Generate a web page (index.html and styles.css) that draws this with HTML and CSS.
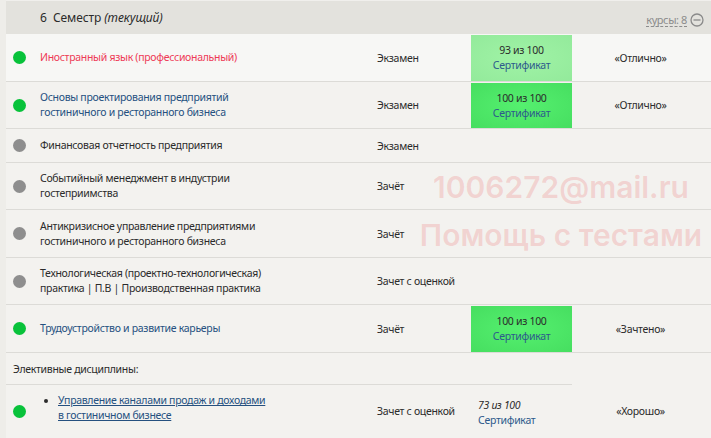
FILE: index.html
```html
<!DOCTYPE html>
<html lang="ru">
<head>
<meta charset="utf-8">
<link rel="stylesheet" href="styles.css">
</head>
<body>
<div class="page">
  <div class="sem-head">
    <span class="sem-num">6</span>
    <span class="sem-title">Семестр <i>(текущий)</i></span>
    <span class="sem-count"><span class="dashed">курсы: 8</span>
      <svg class="minus" width="14" height="14" viewBox="0 0 14 14"><circle cx="7" cy="7" r="6" fill="none" stroke="#8a8a8a" stroke-width="1.3"/><line x1="3.5" y1="7" x2="10.5" y2="7" stroke="#8a8a8a" stroke-width="1.3"/></svg>
    </span>
  </div>

  <div class="row hl h48">
    <div class="c-dot"><span class="dot green"></span></div>
    <div class="c-name red">Иностранный язык (профессиональный)</div>
    <div class="c-type">Экзамен</div>
    <div class="c-score light"><span class="pts">93 из 100</span><span class="cert">Сертификат</span></div>
    <div class="c-res">«Отлично»</div>
  </div>

  <div class="row h46">
    <div class="c-dot"><span class="dot green"></span></div>
    <div class="c-name blue">Основы проектирования предприятий<br>гостиничного и ресторанного бизнеса</div>
    <div class="c-type">Экзамен</div>
    <div class="c-score bright"><span class="pts">100 из 100</span><span class="cert">Сертификат</span></div>
    <div class="c-res">«Отлично»</div>
  </div>

  <div class="row h33">
    <div class="c-dot"><span class="dot grey"></span></div>
    <div class="c-name">Финансовая отчетность предприятия</div>
    <div class="c-type">Экзамен</div>
    <div class="c-score"></div>
    <div class="c-res"></div>
  </div>

  <div class="row h47">
    <div class="c-dot"><span class="dot grey"></span></div>
    <div class="c-name">Событийный менеджмент в индустрии<br>гостеприимства</div>
    <div class="c-type">Зачёт</div>
    <div class="c-score"></div>
    <div class="c-res"></div>
  </div>

  <div class="row h48">
    <div class="c-dot"><span class="dot grey"></span></div>
    <div class="c-name">Антикризисное управление предприятиями<br>гостиничного и ресторанного бизнеса</div>
    <div class="c-type">Зачёт</div>
    <div class="c-score"></div>
    <div class="c-res"></div>
  </div>

  <div class="row h47">
    <div class="c-dot"><span class="dot grey"></span></div>
    <div class="c-name">Технологическая (проектно-технологическая)<br>практика | П.В | Производственная практика</div>
    <div class="c-type">Зачет с оценкой</div>
    <div class="c-score"></div>
    <div class="c-res"></div>
  </div>

  <div class="row h48">
    <div class="c-dot"><span class="dot green"></span></div>
    <div class="c-name blue">Трудоустройство и развитие карьеры</div>
    <div class="c-type">Зачёт</div>
    <div class="c-score bright"><span class="pts">100 из 100</span><span class="cert">Сертификат</span></div>
    <div class="c-res">«Зачтено»</div>
  </div>

  <div class="elective">Элективные дисциплины:</div>

  <div class="row last">
    <div class="c-dot"><span class="dot green"></span></div>
    <div class="c-name"><ul class="elist"><li><a class="link">Управление каналами продаж и доходами<br>в гостиничном бизнесе</a></li></ul></div>
    <div class="c-type">Зачет с оценкой</div>
    <div class="c-score plain"><i class="pts">73 из 100</i><span class="cert">Сертификат</span></div>
    <div class="c-res">«Хорошо»</div>
  </div>

  <div class="watermark">
    <div>1006272@mail.ru</div>
    <div>Помощь с тестами</div>
  </div>
</div>
</body>
</html>
```
FILE: styles.css
```css
html, body {
  margin: 0;
  padding: 0;
  background: #eeede9;
}
body {
  font-family: "Noto Sans", "Liberation Sans", sans-serif;
  font-size: 10.5px;
  letter-spacing: -0.3px;
  color: #2b2b2b;
  width: 711px;
  height: 438px;
  overflow: hidden;
}
.page {
  position: relative;
  margin-left: 6px;
  background: #f3f2ef;
  min-height: 438px;
}
.sem-head {
  height: 33px;
  background: #e3e2dd;
  border-top: 1px solid #f0efec;
  display: flex;
  align-items: center;
  padding-left: 34px;
  color: #2b2b2b;
  font-size: 12px;
  letter-spacing: -0.1px;
}
.sem-num { width: 13px; }
.sem-title { flex: 1; }
.sem-count {
  display: flex;
  align-items: center;
  gap: 3px;
  color: #8c8c8c;
  padding-right: 7px;
  padding-top: 4px;
  font-size: 11px;
  letter-spacing: -0.4px;
}
.dashed { border-bottom: 1px dashed #8c8c8c; line-height: 13px; }
.minus { display: block; }

.row {
  display: grid;
  grid-template-columns: 34px 337px 94px 101px 1fr;
  border-bottom: 1px solid #dcdbd7;
  box-sizing: border-box;
}
.row.hl { background: #f7f7f5; }
.h33 { height: 34px; }
.h46 { height: 47px; }
.h47 { height: 47px; }
.h48 { height: 48px; }
.row > div {
  display: flex;
  align-items: center;
}
.c-dot { padding-left: 7px; }
.dot {
  width: 13px;
  height: 13px;
  border-radius: 50%;
  display: block;
}
.dot.green { background: #08c23a; }
.dot.grey { background: #8e8e8e; }
.c-name { line-height: 15px; }
.c-name.red { color: #ee3a55; }
.c-name.blue { color: #25507f; }
.row > .c-score {
  flex-direction: column;
  justify-content: center;
  line-height: 15px;
  margin-top: 1px;
}
.c-score.light { background: radial-gradient(ellipse at center, #a0f3a6 0%, #93ea9b 100%); }
.c-score.bright { background: radial-gradient(ellipse at center, #55f06f 0%, #46de60 100%); }
.pts { color: #2b2b2b; }
.cert { color: #2d5a8c; }
.row > .c-res { justify-content: center; padding-right: 2px; }

.elective {
  height: 32px;
  display: flex;
  align-items: center;
  padding-left: 7px;
  width: 566px;
  border-bottom: 1px solid #dcdbd7;
  box-sizing: border-box;
}
.row.last { border-bottom: none; height: 54px; padding-bottom: 2px; }
.row.last > .c-name { padding-bottom: 6px; }
.elist {
  margin: 0;
  padding-left: 18px;
  line-height: 15px;
}
.link {
  color: #25507f;
  text-decoration: underline;
}
.row > .c-score.plain {
  align-items: flex-start;
  padding-left: 7px;
  margin-top: 0;
  padding-top: 4px;
}
.plain .pts { font-style: italic; }

.watermark {
  position: absolute;
  left: 405px;
  top: 163px;
  width: 300px;
  text-align: center;
  font-family: "Inter", "Liberation Sans", sans-serif;
  font-weight: 600;
  font-size: 30px;
  line-height: 48px;
  letter-spacing: 0;
  color: rgba(238, 120, 120, 0.26);
  pointer-events: none;
}
```
